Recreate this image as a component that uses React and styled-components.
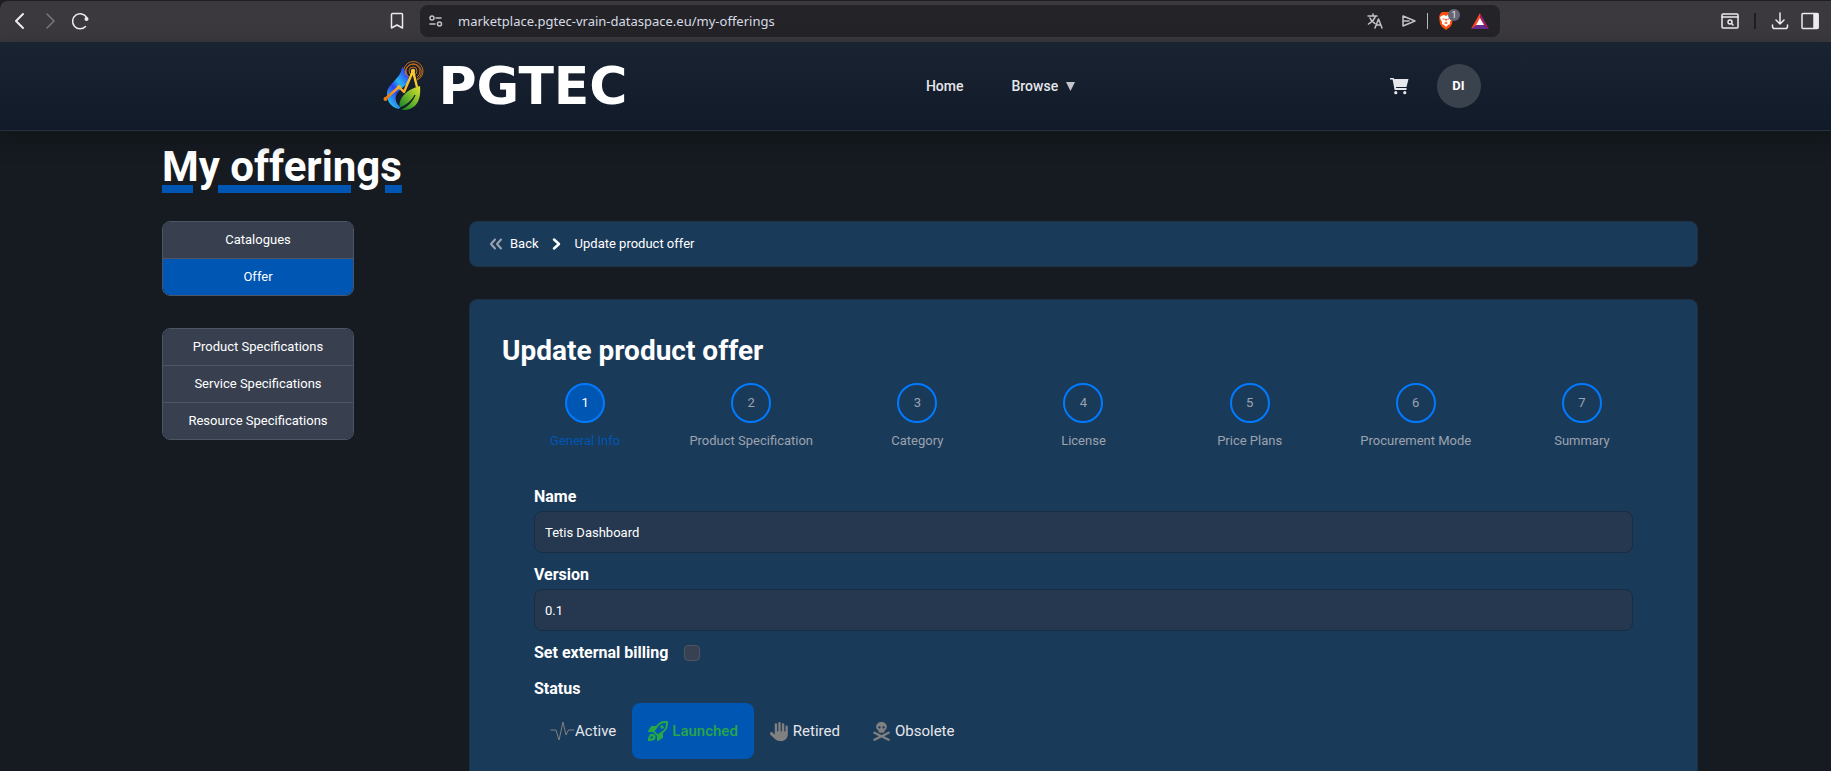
import React from "react";
import styled, { createGlobalStyle } from "styled-components";
import { FaHand, FaSkullCrossbones } from "react-icons/fa6";

const GlobalStyle = createGlobalStyle`
  * {
    box-sizing: border-box;
  }
  body {
    margin: 0;
    background: #161a21;
    color: #fff;
    font-family: Roboto, "Liberation Sans", sans-serif;
    font-size: 13px;
    line-height: 20px;
  }
  button, input {
    font: inherit;
    color: inherit;
  }
  button {
    border: 0;
    padding: 0;
    background: none;
    cursor: pointer;
  }
  a {
    color: inherit;
    text-decoration: none;
  }
`;

const Shell = styled.div`
  height: 100vh;
  display: flex;
  flex-direction: column;
  overflow: hidden;
  background: #1d1c20;
`;

/* browser toolbar */

const Toolbar = styled.div`
  flex: none;
  height: 42px;
  display: grid;
  grid-template-columns: 420px 1fr 331px;
  align-items: center;
  background: #3b393e;
  border-top: 1px solid #1f1e22;
  border-bottom: 1px solid #3b3b3d;
  border-top-left-radius: 8px;
`;

const ToolGroup = styled.div`
  display: flex;
  align-items: center;
  justify-content: ${(props) => (props.$end ? "flex-end" : "space-between")};
  gap: ${(props) => props.$gap || 0}px;
  padding: ${(props) => props.$pad || "0"};
`;

const ToolButton = styled.button`
  display: flex;
  width: 20px;
  height: 20px;
  align-items: center;
  justify-content: center;
  color: ${(props) => props.color || "#ececee"};
  position: relative;
`;

const Separator = styled.span`
  width: ${(props) => (props.$light ? 1 : 2)}px;
  height: 16px;
  background: ${(props) => (props.$light ? "#b9b9bd" : "#1e1d21")};
`;

const AddressBar = styled.div`
  height: 32px;
  display: flex;
  align-items: center;
  gap: 12px;
  padding: 0 10px 0 6px;
  border-radius: 8px;
  background: #242327;
`;

const Url = styled.input`
  flex: 1;
  min-width: 0;
  border: 0;
  padding: 0;
  outline: none;
  background: none;
  color: #d6dbe6;
  font-family: "Noto Sans", sans-serif;
  font-size: 13px;
`;

const ShieldCount = styled.span`
  position: absolute;
  top: -2px;
  right: -4px;
  width: 12px;
  height: 12px;
  border-radius: 6px;
  background: #646675;
  color: #e8e8ee;
  font-size: 9px;
  line-height: 12px;
`;

/* site header */

const Header = styled.header`
  flex: none;
  position: relative;
  height: 89px;
  padding: 0 24px;
  background: linear-gradient(180deg, #1a2332, #111a29);
  border-bottom: 1px solid #273142;
  box-shadow: 0 8px 16px rgba(15, 22, 24, 0.9);
`;

const HeaderInner = styled.div`
  max-width: 1130px;
  height: 100%;
  margin: 0 auto;
  display: flex;
  align-items: center;
  justify-content: space-between;
`;

const Logo = styled.a`
  display: flex;
  align-items: center;
  gap: 12px;
  padding-left: 32px;
  font-family: "DejaVu Sans", sans-serif;
  font-size: 52px;
  font-weight: 700;
  line-height: 60px;
`;

const Nav = styled.nav`
  display: flex;
  align-items: center;
  gap: 48px;
  margin-right: 16px;
  font-size: 14px;
  font-weight: 500;
  color: #e5e7eb;
`;

const BrowseButton = styled.button`
  display: flex;
  align-items: center;
  gap: 8px;
`;

const HeaderActions = styled.div`
  display: flex;
  align-items: center;
  gap: 28px;
  color: #e5e7eb;
`;

const CartButton = styled.button`
  display: flex;
`;

const Avatar = styled.button`
  width: 44px;
  height: 44px;
  border-radius: 22px;
  background: #3a424e;
  color: #fff;
  font-size: 13px;
  font-weight: 700;
`;

/* page */

const Page = styled.main`
  flex: 1;
  min-height: 0;
  overflow: hidden;
  padding: 12px 133px 0 162px;
  background: #161a21;
`;

const PageTitle = styled.h1`
  margin: 0 0 30px;
  font-size: 42px;
  font-weight: 700;
  line-height: 48px;
  text-decoration: underline;
  text-decoration-color: #0056b3;
  text-decoration-thickness: 8px;
  text-underline-offset: 4px;
`;

const Columns = styled.div`
  display: grid;
  grid-template-columns: 192px 1fr;
  gap: 115px;
  align-items: start;
`;

const Sidebar = styled.aside`
  display: flex;
  flex-direction: column;
  gap: 32px;
`;

const MenuGroup = styled.div`
  display: flex;
  flex-direction: column;
  border: 1px solid #4b5563;
  border-radius: 8px;
  overflow: hidden;
`;

const MenuItem = styled.button`
  height: ${(props) => (props.$last ? 36 : 37)}px;
  background: ${(props) => (props.$active ? "#0056b3" : "#384050")};
  border-bottom: ${(props) => (props.$last ? 0 : 1)}px solid #4b5563;
`;

const Content = styled.div`
  display: flex;
  flex-direction: column;
  gap: 32px;
`;

const Breadcrumb = styled.nav`
  height: 46px;
  display: flex;
  align-items: center;
  gap: 12px;
  padding: 0 18px;
  background: #1a3a5a;
  border: 1px solid #1f3042;
  border-radius: 8px;
`;

const BackLink = styled.a`
  display: flex;
  align-items: center;
  gap: 6px;

  svg {
    color: #9ca3af;
  }
`;

const Panel = styled.section`
  padding: 32px;
  background: #1a3a5a;
  border: 1px solid #1f3042;
  border-radius: 8px;
`;

const PanelTitle = styled.h2`
  margin: 0 0 14px;
  font-size: 28px;
  font-weight: 700;
  line-height: 37px;
`;

const Steps = styled.ol`
  display: grid;
  grid-template-columns: repeat(7, 1fr);
  margin: 0 0 34px;
  padding: 0;
  list-style: none;
`;

const Step = styled.li`
  display: flex;
  justify-content: center;
`;

const StepButton = styled.button`
  display: flex;
  flex-direction: column;
  align-items: center;
  gap: 8px;
  color: ${(props) => (props.$active ? "#0056b3" : "#9ca3af")};
`;

const StepCircle = styled.span`
  width: 40px;
  height: 40px;
  display: flex;
  align-items: center;
  justify-content: center;
  border: 2px solid #007bff;
  border-radius: 20px;
  background: ${(props) => (props.$active ? "#0056b3" : "transparent")};
  color: ${(props) => (props.$active ? "#fff" : "#9ca3af")};
`;

const Form = styled.form`
  padding: 0 32px;
`;

const Label = styled.label`
  display: block;
  font-size: 16px;
  font-weight: 700;
  line-height: 24px;
`;

const TextInput = styled.input`
  display: block;
  width: 100%;
  height: 42px;
  margin: 2px 0 10px;
  padding: 0 10px;
  background: #253850;
  border: 1px solid #182c44;
  border-radius: 8px;
  color: #fff;
`;

const CheckRow = styled.div`
  display: flex;
  align-items: center;
  gap: 16px;
  margin-bottom: 12px;
`;

const Checkbox = styled.input`
  appearance: none;
  width: 16px;
  height: 16px;
  margin: 0;
  background: #374151;
  border: 1px solid #4b5563;
  border-radius: 4px;
`;

const StatusLabel = styled(Label).attrs({ as: "div" })`
  margin-bottom: 2px;
`;

const StatusRow = styled.div`
  display: flex;
`;

const StatusButton = styled.button`
  height: 56px;
  display: flex;
  align-items: center;
  gap: ${(props) => (props.$tight ? 0 : 4)}px;
  padding: 0 16px;
  border-radius: 8px;
  background: ${(props) => (props.$active ? "#0056b3" : "transparent")};
  color: ${(props) => (props.$active ? "#28a745" : "#e5e7eb")};
  font-size: 15px;
  font-weight: ${(props) => (props.$active ? 500 : 400)};

  svg {
    flex: none;
    color: ${(props) => (props.$active ? "#28a745" : "#808080")};
  }
`;

const Stroke = ({ width = 18, height = 18, weight = 1.5, children }) => (
  <svg
    width={width}
    height={height}
    viewBox={`0 0 ${width} ${height}`}
    fill="none"
    stroke="currentColor"
    strokeWidth={weight}
    strokeLinecap="round"
    strokeLinejoin="round"
    aria-hidden="true"
  >
    {children}
  </svg>
);

const BraveIcon = () => (
  <svg width="18" height="20" viewBox="0 0 18 20" aria-hidden="true">
    <path d="M5 1h8l2 2 1 3-1 7-2 3-4 3-4-3-2-3-1-7 1-3z" fill="#fb5012" />
    <path
      d="M4 5l3-1 2 1 2-1 3 1 1 2-2 4v2l-2 1-2 2-2-2-2-1v-2L3 7z"
      fill="#fff"
    />
    <path
      d="M5 7l3 1-1 1zM13 7l-3 1 1 1zM8 8h2l-1 3zM7 12l2-1 2 1-2 1z"
      fill="#fb5012"
    />
  </svg>
);

const RewardsIcon = () => (
  <svg width="18" height="16" viewBox="0 0 18 16" aria-hidden="true">
    <path d="M9 0L0 16l9-6z" fill="#ff4724" />
    <path d="M9 0l9 16-9-6z" fill="#9e1f63" />
    <path d="M0 16h18l-9-6z" fill="#662d91" />
    <path d="M9 5l4 7H5z" fill="#fff" />
  </svg>
);

const CartIcon = () => (
  <svg width="19" height="17" viewBox="0 0 19 17" aria-hidden="true">
    <path
      d="M0 0h3.600l.5 1H18.500l-2 8H6l.2 1H16.500v2H4.600L2.600 1.600H0z"
      fill="currentColor"
    />
    <circle cx="5.800" cy="14.700" r="1.600" fill="currentColor" />
    <circle cx="14.800" cy="14.700" r="1.600" fill="currentColor" />
  </svg>
);

const LogoMark = () => (
  <svg width="44" height="52" viewBox="0 0 44 52" aria-hidden="true">
    <defs>
      <linearGradient id="drop" x1="1" y1="0" x2="0.3" y2="1">
        <stop offset="0" stopColor="#3a2bea" />
        <stop offset="0.2" stopColor="#2f5cf5" />
        <stop offset="0.45" stopColor="#25b5f2" />
        <stop offset="0.65" stopColor="#3140f0" />
        <stop offset="1" stopColor="#29c0f0" />
      </linearGradient>
      <linearGradient id="leaf" x1="1" y1="0" x2="0.1" y2="1">
        <stop offset="0" stopColor="#e3e32b" />
        <stop offset="0.5" stopColor="#76b82b" />
        <stop offset="1" stopColor="#138326" />
      </linearGradient>
      <linearGradient id="signal" x1="1" y1="0" x2="0" y2="1">
        <stop offset="0" stopColor="#ffd52b" />
        <stop offset="0.6" stopColor="#f8b02c" />
        <stop offset="1" stopColor="#ee6a0a" />
      </linearGradient>
    </defs>
    <path
      d="M19 7c5 5 8 9 6 16l-7 6c-8 6-7 15 2 20-9 1-17-6-16-16C5 23 18 19 19 7z"
      fill="url(#drop)"
    />
    <g fill="none" stroke="#c96d18" strokeWidth="1">
      <circle cx="30" cy="11" r="4" />
      <path d="M26 17a7 7 0 1 1 8 0" />
      <path d="M23 15a8 8 0 1 1 11 4" />
      <path d="M21 9a9.600 9.600 0 1 1 13 11" />
    </g>
    <path
      d="M2 39l14-12 5 5 9-21 4 16"
      fill="none"
      stroke="url(#signal)"
      strokeWidth="2.400"
      strokeLinejoin="round"
    />
    <circle cx="2.500" cy="39" r="2" fill="#f07a0b" />
    <circle cx="16" cy="27" r="2" fill="#f8b02c" />
    <circle cx="30" cy="11" r="2.200" fill="#ffc52c" />
    <path d="M37 26c1 12-2 23-16 24-6-1-5-7-3-11 4-8 12-11 19-13z" fill="url(#leaf)" />
    <path
      d="M16 50c9-3 14-9 16-15-4 7-9 10-15 13z"
      fill="#111d26"
      stroke="#111d26"
      strokeWidth="0.800"
    />
  </svg>
);

const PulseIcon = () => (
  <Stroke width={25} height={20} weight={1}>
    <path d="M1 9h5l3 10 4-18 3 13 2.500-5H24" />
  </Stroke>
);

const RocketIcon = () => (
  <svg width="20" height="20" viewBox="0 0 20 20" aria-hidden="true">
    <path
      fillRule="evenodd"
      fill="currentColor"
      d="M19 0c.6 0 1 .4 1 1 .2 5-1 8-5 11v4c0 .6-.3 1-.8 1.300L10 20c-.6.300-1 0-1-.600V15l-4-4H.6C0 11-.200 10.500.1 10L2.700 5.800C3 5.300 3.400 5 4 5h4c3-4 6-5.200 11-5zM17.900 2C14 2 11.500 3 9 7l-2.300 3.300 3 3L13 11c4-2.500 5-5 4.900-9zM14 4.200a1.800 1.800 0 1 1 0 3.600 1.800 1.800 0 0 1 0-3.600zM1.500 14c1.500-1.500 4-1.500 5.200-.2C8 15 8 17.200 6.500 18.700 5 20 .6 20 0 20c0-1 0-4.500 1.500-6zM3 15.700c-.6.600-.7 1.700-.7 2.100.5 0 1.500 0 2.200-.7.500-.5.600-1.100.2-1.500-.4-.5-1.200-.4-1.700.1z"
    />
  </svg>
);

const steps = [
  "General Info",
  "Product Specification",
  "Category",
  "License",
  "Price Plans",
  "Procurement Mode",
  "Summary",
];

const menus = [
  ["Catalogues", "Offer"],
  ["Product Specifications", "Service Specifications", "Resource Specifications"],
];

const statuses = [
  { name: "Active", icon: <PulseIcon />, tight: true },
  { name: "Launched", icon: <RocketIcon /> },
  { name: "Retired", icon: <FaHand size={19} /> },
  { name: "Obsolete", icon: <FaSkullCrossbones size={19} /> },
];

function BrowserToolbar() {
  return (
    <Toolbar>
      <ToolGroup $pad="0 13px 0 10px">
        <ToolGroup $gap={10}>
          <ToolButton aria-label="Back">
            <Stroke weight={2}>
              <path d="M12 2L5 9l7 7" />
            </Stroke>
          </ToolButton>
          <ToolButton aria-label="Forward" color="#77767a">
            <Stroke>
              <path d="M6 2l7 7-7 7" />
            </Stroke>
          </ToolButton>
          <ToolButton aria-label="Reload">
            <Stroke>
              <path d="M14.500 14.500A7.500 7.500 0 1 1 15.600 5.500" />
              <circle cx="15.500" cy="7" r="2" fill="currentColor" stroke="none" />
            </Stroke>
          </ToolButton>
        </ToolGroup>
        <ToolButton aria-label="Bookmark this page">
          <Stroke>
            <path d="M3.500 2.500c0-1 .5-1 1-1h9c1 0 1 .5 1 1V16L9 13l-5.500 3z" />
          </Stroke>
        </ToolButton>
      </ToolGroup>
      <AddressBar>
        <ToolButton aria-label="Site information" color="#c4c4c8">
          <Stroke>
            <circle cx="5" cy="6" r="2" />
            <path d="M9 6h5M3 12h5" />
            <circle cx="12.500" cy="12" r="2" />
          </Stroke>
        </ToolButton>
        <Url
          aria-label="Address"
          defaultValue="marketplace.pgtec-vrain-dataspace.eu/my-offerings"
        />
        <ToolGroup $gap={8}>
          <ToolGroup $gap={14}>
            <ToolButton aria-label="Translate" color="#c4c4c8">
              <Stroke>
                <path d="M2 4h9M7 2v2M9.500 4c-1 4-4 6-7 8M4 6c1 3 3 4 5 5.500M9 16l3.500-9 3.500 9M10.500 13h4" />
              </Stroke>
            </ToolButton>
            <ToolButton aria-label="Share" color="#c4c4c8">
              <Stroke>
                <path d="M3 4l12 5-12 5V4zM3 9h6" />
              </Stroke>
            </ToolButton>
          </ToolGroup>
          <Separator $light />
          <ToolGroup $gap={14}>
            <ToolButton aria-label="Shields">
              <BraveIcon />
              <ShieldCount>1</ShieldCount>
            </ToolButton>
            <ToolButton aria-label="Rewards">
              <RewardsIcon />
            </ToolButton>
          </ToolGroup>
        </ToolGroup>
      </AddressBar>
      <ToolGroup $end $gap={14} $pad="0 11px 0 0">
        <ToolButton aria-label="Search tabs">
          <Stroke>
            <rect x="1" y="2" width="16" height="14" rx="1" />
            <path d="M1 5h16" />
            <circle cx="9" cy="10" r="2" />
            <path d="M11 12l1 1" />
          </Stroke>
        </ToolButton>
        <Separator />
        <ToolGroup $gap={10}>
          <ToolButton aria-label="Downloads">
            <Stroke>
              <path d="M9 1v11M5 8l4 4 4-4M1.500 13v2l1 1.500h13l1-1.500v-2" />
            </Stroke>
          </ToolButton>
          <ToolButton aria-label="Side panel">
            <Stroke>
              <rect x="1" y="1.500" width="16" height="15" rx="1" />
              <path d="M13 2h4v14h-4z" fill="currentColor" />
            </Stroke>
          </ToolButton>
        </ToolGroup>
      </ToolGroup>
    </Toolbar>
  );
}

function SiteHeader() {
  return (
    <Header>
      <HeaderInner>
        <Logo href="#">
          <LogoMark />
          PGTEC
        </Logo>
        <Nav>
          <a href="#">Home</a>
          <BrowseButton>
            Browse
            <svg width="9" height="9" viewBox="0 0 9 9" aria-hidden="true">
              <path d="M0 0h9L4.500 9z" fill="#c3c5cb" />
            </svg>
          </BrowseButton>
        </Nav>
        <HeaderActions>
          <CartButton aria-label="Cart">
            <CartIcon />
          </CartButton>
          <Avatar>DI</Avatar>
        </HeaderActions>
      </HeaderInner>
    </Header>
  );
}

function App() {
  return (
    <Shell>
      <GlobalStyle />
      <BrowserToolbar />
      <SiteHeader />
      <Page>
        <PageTitle>My offerings</PageTitle>
        <Columns>
          <Sidebar>
            {menus.map((items) => (
              <MenuGroup key={items[0]}>
                {items.map((item, i) => (
                  <MenuItem
                    key={item}
                    $active={item === "Offer"}
                    $last={i === items.length - 1}
                  >
                    {item}
                  </MenuItem>
                ))}
              </MenuGroup>
            ))}
          </Sidebar>
          <Content>
            <Breadcrumb aria-label="Breadcrumb">
              <BackLink href="#">
                <Stroke width={16} height={14} weight={2}>
                  <path d="M7 2.500L3 7l4 4.500M13 2.500L9 7l4 4.500" />
                </Stroke>
                Back
              </BackLink>
              <Stroke width={12} height={14} weight={2.5}>
                <path d="M3 2.500L8 7l-5 4.500" />
              </Stroke>
              <span>Update product offer</span>
            </Breadcrumb>
            <Panel>
              <PanelTitle>Update product offer</PanelTitle>
              <Steps>
                {steps.map((step, i) => (
                  <Step key={step}>
                    <StepButton $active={i === 0}>
                      <StepCircle $active={i === 0}>{i + 1}</StepCircle>
                      {step}
                    </StepButton>
                  </Step>
                ))}
              </Steps>
              <Form onSubmit={(e) => e.preventDefault()}>
                <Label htmlFor="name">Name</Label>
                <TextInput id="name" type="text" defaultValue="Tetis Dashboard" />
                <Label htmlFor="version">Version</Label>
                <TextInput id="version" type="text" defaultValue="0.1" />
                <CheckRow>
                  <Label htmlFor="billing">Set external billing</Label>
                  <Checkbox id="billing" type="checkbox" />
                </CheckRow>
                <StatusLabel>Status</StatusLabel>
                <StatusRow>
                  {statuses.map(({ name, icon, tight }) => (
                    <StatusButton
                      key={name}
                      type="button"
                      $active={name === "Launched"}
                      $tight={tight}
                    >
                      {icon}
                      {name}
                    </StatusButton>
                  ))}
                </StatusRow>
              </Form>
            </Panel>
          </Content>
        </Columns>
      </Page>
    </Shell>
  );
}

export default App;
